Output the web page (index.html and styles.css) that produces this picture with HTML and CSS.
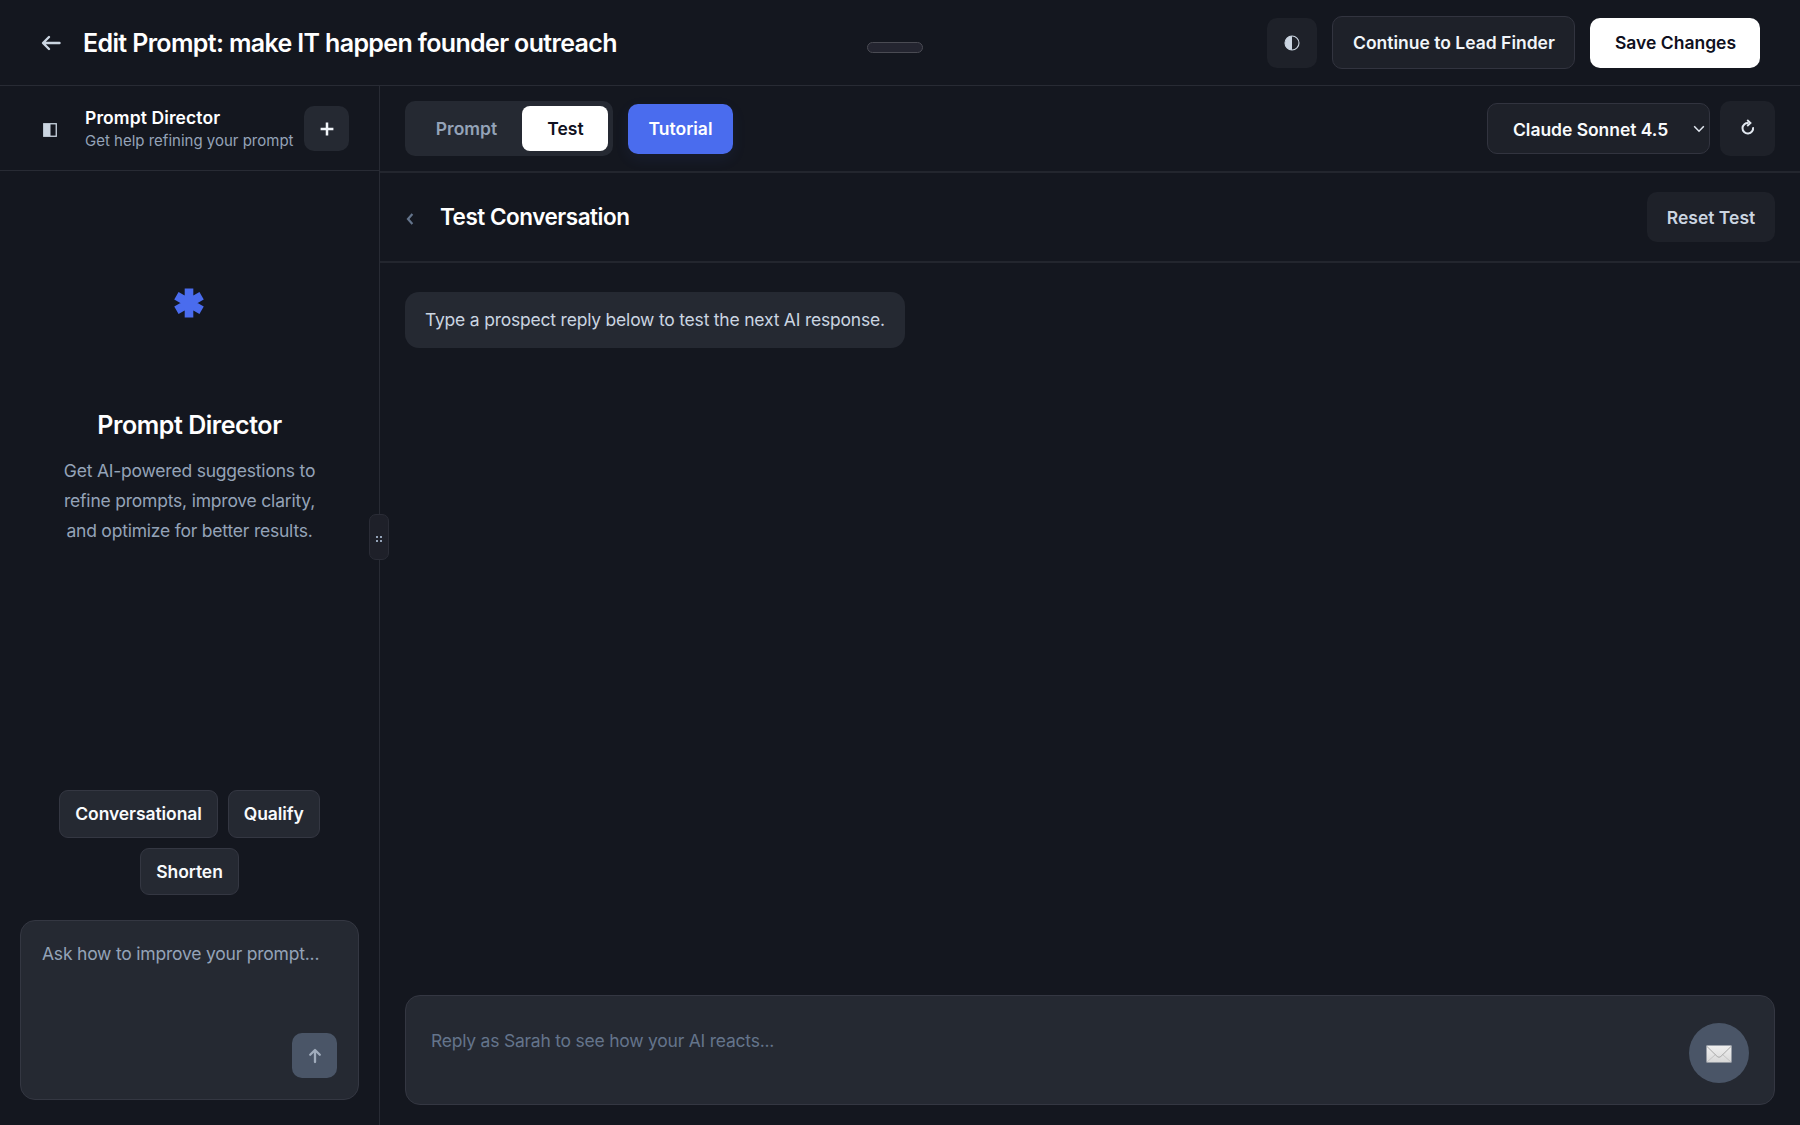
FILE: index.html
```
<!DOCTYPE html>
<html lang="en">
<head>
  <meta charset="UTF-8" />
  <meta name="viewport" content="width=device-width, initial-scale=1.0"/>
  <title>Edit Prompt</title>
  <link rel="stylesheet" href="styles.css">
</head>
<body>
  <header class="topbar">
    <button type="button" class="back-btn" aria-label="Back">
      <svg width="20" height="18" viewBox="0 0 20 18"><path d="M18.5 9H2.5M8 3L2 9l6 6"/></svg>
    </button>
    <h1>Edit Prompt: make IT happen founder outreach</h1>
    <div class="top-pill"></div>
    <div class="top-actions">
      <button type="button" class="icon-btn theme-btn" aria-label="Theme">
        <svg width="16" height="16" viewBox="0 0 16 16"><circle cx="8" cy="8" r="7"/><path d="M8 1a7 7 0 0 0 0 14z"/></svg>
      </button>
      <button type="button" class="btn outline-btn">Continue to Lead Finder</button>
      <button type="button" class="btn save-btn">Save Changes</button>
    </div>
  </header>

  <div class="layout">
    <aside class="sidebar">
      <div class="side-header">
        <svg class="panel-icon" width="14" height="14" viewBox="0 0 14 14"><rect x=".75" y=".75" width="12.5" height="12.5"/><path d="M1 1h6.5v12H1z"/></svg>
        <div class="side-title">
          <strong>Prompt Director</strong>
          <span>Get help refining your prompt</span>
        </div>
        <button type="button" class="new-btn" aria-label="New chat">
          <svg width="14" height="14" viewBox="0 0 14 14"><path d="M7 .6v12.8M.6 7h12.8"/></svg>
        </button>
      </div>

      <div class="intro">
        <svg class="star" width="30" height="30" viewBox="-15 -15 30 30"><path d="M0-14.6V14.6M-12.6-7.3L12.6 7.3M-12.6 7.3L12.6-7.3"/></svg>
        <h2>Prompt Director</h2>
        <p>Get AI-powered suggestions to<br>refine prompts, improve clarity,<br>and optimize for better results.</p>
      </div>

      <div class="chips">
        <button type="button" class="chip">Conversational</button>
        <button type="button" class="chip">Qualify</button>
        <button type="button" class="chip">Shorten</button>
      </div>

      <div class="ask-box">
        <div class="ask-placeholder">Ask how to improve your prompt...</div>
        <button type="button" class="ask-send" aria-label="Send">
          <svg width="14" height="16" viewBox="0 0 14 16"><path d="M7 14V2.2M2.2 6.8L7 2l4.8 4.8"/></svg>
        </button>
      </div>

      <div class="resize-handle"><i></i><i></i><i></i><i></i></div>
    </aside>

    <main class="main">
      <div class="toolbar">
        <div class="tabs">
          <button type="button" class="tab">Prompt</button>
          <button type="button" class="tab active">Test</button>
        </div>
        <button type="button" class="btn tutorial-btn">Tutorial</button>
        <div class="model-group">
          <button type="button" class="model-select">
            <span>Claude Sonnet 4.5</span>
            <svg width="12" height="8" viewBox="0 0 12 8"><path d="M1.2 1.2L6 6.2l4.8-5"/></svg>
          </button>
          <button type="button" class="icon-btn refresh-btn" aria-label="Refresh">
            <svg width="16" height="18" viewBox="0 0 16 18"><path d="M13 8.2A5.3 5.3 0 1 1 8.6 4"/><path class="head" d="M7.2 1l3.3 3-3.3 3"/></svg>
          </button>
        </div>
      </div>

      <div class="test-header">
        <svg class="chevron" width="8" height="12" viewBox="0 0 8 12"><path d="M6.4 1L2 6l4.4 5"/></svg>
        <h3>Test Conversation</h3>
        <button type="button" class="btn reset-btn">Reset Test</button>
      </div>

      <div class="messages">
        <div class="bubble">Type a prospect reply below to test the next AI response.</div>
      </div>

      <div class="composer">
        <div class="composer-placeholder">Reply as Sarah to see how your AI reacts...</div>
        <button type="button" class="mail-btn" aria-label="Send reply">
          <svg width="26" height="18" viewBox="0 0 26 18">
            <defs><linearGradient id="paper" x1="0" y1="0" x2="0" y2="1"><stop offset="0" stop-color="#f0f0f0"/><stop offset="1" stop-color="#d8d8d8"/></linearGradient></defs>
            <rect x=".5" y=".5" width="25" height="17" fill="url(#paper)"/>
            <path d="M1 17l8.5-7.5M25 17l-8.5-7.5" stroke="#c4c4c4"/>
            <path d="M1 1.5l10.2 10q1.8 1.6 3.6 0L25 1.5" stroke="#a9a9a9"/>
          </svg>
        </button>
      </div>
    </main>
  </div>
</body>
</html>
```

FILE: styles.css
```
* {
  box-sizing: border-box;
}
body {
  margin: 0;
  height: 100vh;
  display: flex;
  flex-direction: column;
  overflow: hidden;
  font-family: Inter, "Liberation Sans", sans-serif;
  font-size: 17.5px;
  background: #14171f;
  color: #fff;
}
button {
  font: inherit;
  color: inherit;
  border: none;
  padding: 0;
  cursor: pointer;
  display: flex;
  align-items: center;
  justify-content: center;
  flex-shrink: 0;
  white-space: nowrap;
}
svg {
  display: block;
  flex-shrink: 0;
  fill: none;
}
h1, h2, h3, p {
  margin: 0;
}

/* top bar */
.topbar {
  position: relative;
  height: 86px;
  flex-shrink: 0;
  display: flex;
  align-items: center;
  padding: 0 40px 0 41px;
  border-bottom: 1px solid #282b34;
}
.back-btn {
  background: none;
  stroke: #cbd5e1;
  stroke-width: 2.4;
  stroke-linecap: round;
  stroke-linejoin: round;
}
h1 {
  margin-left: 22px;
  padding-top: 1px;
  font-size: 25px;
  font-weight: 600;
  letter-spacing: -0.65px;
}
.top-pill {
  position: absolute;
  left: 867px;
  top: 42px;
  width: 56px;
  height: 11px;
  border: 1px solid #4a4b53;
  border-radius: 6px;
  background: #242530;
}
.top-actions {
  margin-left: auto;
  display: flex;
  align-items: center;
  gap: 15px;
}
.btn {
  height: 50px;
  border-radius: 10px;
  font-weight: 600;
}
.icon-btn {
  background: #1e2129;
  border-radius: 10px;
}
.theme-btn {
  width: 50px;
  height: 50px;
}
.theme-btn circle {
  stroke: #cbd5e1;
  stroke-width: 1.1;
}
.theme-btn path {
  fill: #cbd5e1;
}
.outline-btn {
  width: 243px;
  height: 53px;
  padding-left: 1px;
  background: #1e2129;
  border: 1px solid #32343f;
  color: #f1f5f9;
}
.save-btn {
  width: 170px;
  padding-left: 1px;
  background: #fff;
  color: #0f1020;
}

/* sidebar */
.layout {
  flex: 1;
  display: flex;
  min-height: 0;
}
.sidebar {
  position: relative;
  width: 380px;
  flex-shrink: 0;
  display: flex;
  flex-direction: column;
  border-right: 1px solid #282b34;
}
.side-header {
  height: 85px;
  display: flex;
  align-items: center;
  padding: 0 30px 0 43px;
  border-bottom: 1px solid #282b34;
}
.panel-icon {
  margin-top: 4px;
}
.panel-icon rect {
  stroke: #cbd5e1;
  stroke-width: 1.3;
}
.panel-icon path {
  fill: #cbd5e1;
}
.side-title {
  margin-left: 28px;
  padding-top: 2px;
  display: flex;
  flex-direction: column;
  white-space: nowrap;
}
.side-title strong {
  font-weight: 600;
  line-height: 23px;
  letter-spacing: 0.1px;
}
.side-title span {
  font-size: 15px;
  line-height: 23px;
  color: #94a3b8;
}
.new-btn {
  margin-left: auto;
  width: 45px;
  height: 45px;
  padding-top: 2px;
  border-radius: 10px;
  background: #252932;
  stroke: #f1f5f9;
  stroke-width: 2.5;
}
.intro {
  flex: 1;
  display: flex;
  flex-direction: column;
  align-items: center;
  padding-top: 117px;
  text-align: center;
}
.star {
  margin-right: 1px;
}
.star path {
  stroke: #4a6cee;
  stroke-width: 8.6;
}
h2 {
  margin-top: 91px;
  font-size: 25px;
  line-height: 32px;
  font-weight: 600;
  letter-spacing: -0.45px;
}
.intro p {
  margin-top: 15px;
  line-height: 30px;
  letter-spacing: -0.21px;
  color: #94a3b8;
}
.chips {
  display: flex;
  flex-wrap: wrap;
  justify-content: center;
  gap: 10px;
  padding: 0 40px;
}
.chip {
  height: 47.5px;
  padding: 0 15px;
  border: 1px solid #343742;
  border-radius: 9px;
  background: #252932;
  color: #f8fafc;
  font-weight: 600;
  letter-spacing: -0.08px;
}
.ask-box {
  margin: 25px 20px 25px;
  height: 180px;
  padding: 21px 21px 21px 21px;
  display: flex;
  flex-direction: column;
  justify-content: space-between;
  border: 1px solid #343742;
  border-radius: 15px;
  background: #252932;
}
.ask-placeholder {
  line-height: 24px;
  letter-spacing: -0.21px;
  color: #94a3b8;
}
.ask-send {
  align-self: flex-end;
  width: 45px;
  height: 45px;
  border-radius: 10px;
  background: #4a5567;
  stroke: #a1acbc;
  stroke-width: 2.3;
  stroke-linecap: round;
  stroke-linejoin: round;
}
.resize-handle {
  position: absolute;
  right: -10px;
  top: 428px;
  width: 20px;
  height: 46px;
  display: grid;
  grid-template-columns: 2px 2px;
  gap: 2px;
  align-content: center;
  justify-content: center;
  padding-top: 3px;
  border: 1px solid #2a2c36;
  border-radius: 7px;
  background: #1e2029;
}
.resize-handle i {
  height: 2px;
  background: #94a3b8;
}

/* main column */
.main {
  flex: 1;
  min-width: 0;
  display: flex;
  flex-direction: column;
}
.toolbar {
  height: 87px;
  display: flex;
  align-items: center;
  padding: 0 25px;
  border-bottom: 2px solid #23262e;
}
.tabs {
  display: flex;
  align-items: center;
  width: 208px;
  height: 55px;
  padding: 5px;
  border-radius: 10px;
  background: #252932;
}
.tab {
  flex: 1;
  height: 45px;
  padding-left: 1px;
  border-radius: 8px;
  background: none;
  color: #94a3b8;
  font-weight: 600;
}
.tab.active {
  flex: none;
  width: 86px;
  background: #fff;
  color: #0f1020;
}
.tutorial-btn {
  margin-left: 15px;
  width: 105px;
  background: #4a6cee;
  box-shadow: 0 5px 15px rgba(75, 110, 242, 0.08);
}
.model-group {
  margin-left: auto;
  display: flex;
  align-items: center;
  gap: 10px;
}
.model-select {
  width: 223px;
  height: 51px;
  padding: 1px 4px 0 25px;
  justify-content: space-between;
  border: 1px solid #32343f;
  border-radius: 10px;
  background: #1e2129;
  color: #f8fafc;
  font-weight: 600;
  letter-spacing: -0.04px;
  stroke: #e2e8f0;
  stroke-width: 1.5;
}
.model-select span {
  stroke: none;
}
.refresh-btn {
  width: 55px;
  height: 55px;
  padding-bottom: 1px;
}
.refresh-btn path {
  stroke: #e2e8f0;
  stroke-width: 2;
}
.refresh-btn .head {
  stroke-width: 1.8;
}
.test-header {
  height: 90px;
  display: flex;
  align-items: center;
  padding: 0 25px 0 26px;
  border-bottom: 2px solid #23262e;
}
.chevron {
  margin-top: 4px;
  stroke: #64748b;
  stroke-width: 2.2;
}
h3 {
  margin-left: 26px;
  padding-bottom: 1px;
  font-size: 22.5px;
  font-weight: 600;
  letter-spacing: -0.48px;
}
.reset-btn {
  margin-left: auto;
  width: 128px;
  background: #1e2129;
  color: #cbd5e1;
}
.messages {
  flex: 1;
  padding: 29px 25px;
}
.bubble {
  width: fit-content;
  padding: 0 20px;
  line-height: 56px;
  letter-spacing: -0.21px;
  border-radius: 14px;
  background: #252932;
  color: #cbd5e1;
}
.composer {
  margin: 0 25px 20px;
  height: 110px;
  display: flex;
  align-items: center;
  justify-content: space-between;
  padding: 0 25px;
  border: 1px solid #343742;
  border-radius: 15px;
  background: #252932;
}
.composer-placeholder {
  padding-bottom: 19px;
  letter-spacing: -0.23px;
  color: #64748b;
}
.mail-btn {
  width: 60px;
  height: 60px;
  margin-top: 6px;
  padding-top: 1px;
  border-radius: 50%;
  background: #4a5567;
}
```
